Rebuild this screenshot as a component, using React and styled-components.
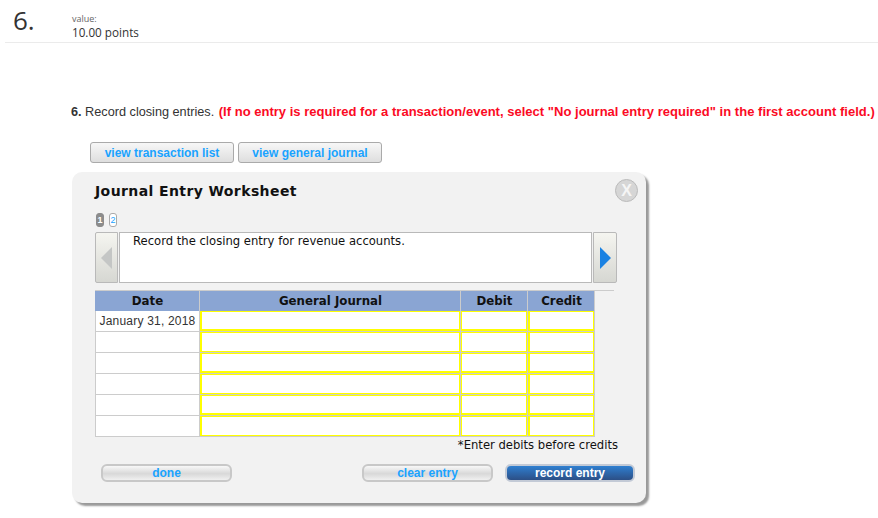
import React from "react";
import styled, { createGlobalStyle } from "styled-components";

const GlobalStyle = createGlobalStyle`
  html, body {
    margin: 0;
    padding: 0;
    background: #fff;
    overflow: hidden;
  }
`;

const columns = "104px 260px 66px 66px";
const rows = ["January 31, 2018", "", "", "", "", ""];

const App = () => {
  return (
    <>
      <GlobalStyle />
      <Page>
        <Header>
          <Number>6.</Number>
          <Value>
            <ValueLabel>value:</ValueLabel>
            <Points>10.00 points</Points>
          </Value>
        </Header>
        <Question>
          <b>6.</b> Record closing entries.{" "}
          <Warning>
            (If no entry is required for a transaction/event, select "No journal entry required" in the first account field.)
          </Warning>
        </Question>
        <ViewButtons>
          <ViewButton>view transaction list</ViewButton>
          <ViewButton>view general journal</ViewButton>
        </ViewButtons>
        <Panel>
          <TitleRow>
            <Title>Journal Entry Worksheet</Title>
            <CloseButton>X</CloseButton>
          </TitleRow>
          <Pager>
            <PageTag $active>1</PageTag>
            <PageTag>2</PageTag>
          </Pager>
          <Prompt>
            <Arrow $side="left">
              <svg width="11" height="22" viewBox="0 0 11 22">
                <path d="M11 0V22L0 11Z" fill="#c4c6c5" />
              </svg>
            </Arrow>
            <PromptText>Record the closing entry for revenue accounts.</PromptText>
            <Arrow $side="right">
              <svg width="11" height="22" viewBox="0 0 11 22">
                <path d="M0 0V22L11 11Z" fill="#1a82e2" />
              </svg>
            </Arrow>
          </Prompt>
          <Sheet>
            <HeadRow>
              <HeadCell>Date</HeadCell>
              <HeadCell>General Journal</HeadCell>
              <HeadCell>Debit</HeadCell>
              <HeadCell>Credit</HeadCell>
            </HeadRow>
            {rows.map((date, i) => (
              <Row key={i}>
                <DateCell>{date}</DateCell>
                <InputCell $strong $thick={i % 2 === 0} />
                <InputCell $thick={i % 2 === 0} />
                <InputCell $strong $thick={i % 2 === 0} />
              </Row>
            ))}
          </Sheet>
          <Note>*Enter debits before credits</Note>
          <Actions>
            <PillButton>done</PillButton>
            <RightActions>
              <PillButton>clear entry</PillButton>
              <PillButton $primary>record entry</PillButton>
            </RightActions>
          </Actions>
        </Panel>
      </Page>
    </>
  );
};

export default App;

const Page = styled.div`
  width: 878px;
  height: 518px;
  overflow: hidden;
  font-family: "Liberation Sans", Arial, sans-serif;
`;

const Header = styled.div`
  height: 42px;
  margin-left: 5px;
  border-bottom: 1px solid #ebebeb;
  display: flex;
`;

const Number = styled.div`
  width: 67px;
  padding: 5px 0 0 8px;
  box-sizing: border-box;
  font-family: "Open Sans", sans-serif;
  font-size: 26px;
  line-height: 30px;
  color: #333;
`;

const Value = styled.div`
  padding-top: 13px;
  font-family: "Open Sans", sans-serif;
  color: #333;
`;

const ValueLabel = styled.div`
  font-size: 9px;
  line-height: 11px;
  color: #666;
`;

const Points = styled.div`
  font-size: 11.7px;
  line-height: 16px;
`;

const Question = styled.div`
  margin: 60px 0 0 71px;
  width: 807px;
  height: 18px;
  font-size: 12.7px;
  line-height: 18px;
  color: #333;
  white-space: nowrap;
`;

const Warning = styled.b`
  color: #fb0a24;
  font-size: 13px;
  letter-spacing: 0.02px;
  margin-left: 1px;
`;

const ViewButtons = styled.div`
  display: flex;
  gap: 4px;
  margin: 21px 0 0 90px;
`;

const ViewButton = styled.div`
  width: 144px;
  height: 21px;
  box-sizing: border-box;
  border: 1px solid #aaa;
  border-radius: 3px;
  background: linear-gradient(#f7f7f7, #dedede);
  color: #1aa3ff;
  font-size: 12px;
  font-weight: bold;
  line-height: 21px;
  text-align: center;
`;

const Panel = styled.div`
  width: 574px;
  height: 331px;
  box-sizing: border-box;
  margin: 9px 0 0 72px;
  padding: 0 0 0 23px;
  border-radius: 10px;
  background: #f2f2f2;
  box-shadow: 3px 3px 2px #999;
  font-family: "DejaVu Sans", Verdana, sans-serif;
  color: #111;
`;

const TitleRow = styled.div`
  height: 41px;
  display: flex;
  justify-content: space-between;
  padding-right: 8px;
`;

const Title = styled.div`
  margin-top: 10px;
  font-size: 14px;
  font-weight: bold;
  letter-spacing: 0.4px;
  line-height: 18px;
`;

const CloseButton = styled.div`
  width: 21px;
  height: 21px;
  margin-top: 7px;
  border: 1px solid #bbb;
  border-radius: 50%;
  background: #d6d6d6;
  color: #f5f5f5;
  font-family: "Liberation Sans", sans-serif;
  font-size: 16px;
  font-weight: bold;
  line-height: 21px;
  text-align: center;
`;

const Pager = styled.div`
  display: flex;
  gap: 5px;
  height: 19px;
  padding-left: 1px;
`;

const PageTag = styled.div`
  width: 8px;
  height: 14px;
  box-sizing: border-box;
  border: 1px solid ${(p) => (p.$active ? "#8c8c8c" : "#aaa")};
  border-radius: 3px;
  background: ${(p) => (p.$active ? "#8c8c8c" : "#fff")};
  color: ${(p) => (p.$active ? "#fff" : "#1aa3ff")};
  font-family: "Liberation Sans", sans-serif;
  font-size: 9px;
  font-weight: ${(p) => (p.$active ? "bold" : "normal")};
  line-height: 12px;
  text-align: center;
`;

const Prompt = styled.div`
  display: flex;
  width: 522px;
  height: 51px;
  gap: 1px;
`;

const Arrow = styled.div`
  width: ${(p) => (p.$side === "left" ? "23px" : "24px")};
  box-sizing: border-box;
  border: 1px solid #b9b9b9;
  border-radius: ${(p) => (p.$side === "left" ? "2px 0 0 2px" : "0 2px 2px 0")};
  background: linear-gradient(#f5f5f0, #d6d7d2);
  display: flex;
  align-items: center;
  justify-content: center;
`;

const PromptText = styled.div`
  flex: 1;
  box-sizing: border-box;
  border: 1px solid #b9b9b9;
  background: #fff;
  padding: 1px 0 0 13px;
  font-size: 11.6px;
  line-height: 15px;
`;

const Sheet = styled.div`
  width: 500px;
  margin-top: 7px;
  border-top: 1px solid #ccc;
  position: relative;
  &::before {
    content: "";
    position: absolute;
    top: -1px;
    left: 500px;
    width: 19px;
    height: 1px;
    background: #ccc;
  }
`;

const HeadRow = styled.div`
  display: grid;
  grid-template-columns: ${columns};
  gap: 1px;
  height: 19px;
  background: #ccc;
  border-bottom: 1px solid #ccc;
`;

const HeadCell = styled.div`
  background: #8aa5d3;
  padding-left: 1px;
  font-size: 11.8px;
  font-weight: bold;
  line-height: 20px;
  text-align: center;
`;

const Row = styled.div`
  display: grid;
  grid-template-columns: ${columns};
  gap: 1px;
  height: 20px;
  background: #ccc;
  border-bottom: 1px solid #ccc;
`;

const DateCell = styled.div`
  background: #fff;
  border-left: 1px solid #ccc;
  font-family: "Liberation Sans", sans-serif;
  font-size: 12px;
  letter-spacing: 0.2px;
  line-height: 20px;
  text-align: center;
  color: #333;
`;

const InputCell = styled.div`
  background: #fff;
  border-style: solid;
  border-color: #ffff00;
  border-width: 1px 1px ${(p) => (p.$thick ? "2px" : "1px")} ${(p) => (p.$strong ? "2px" : "1px")};
`;

const Note = styled.div`
  width: 523px;
  height: 15px;
  padding-top: 1px;
  font-size: 11.6px;
  line-height: 15px;
  text-align: right;
`;

const Actions = styled.div`
  display: flex;
  justify-content: space-between;
  width: 534px;
  margin: 11px 0 0 6px;
`;

const RightActions = styled.div`
  display: flex;
  gap: 12px;
`;

const PillButton = styled.div`
  width: ${(p) => (p.$primary ? "130px" : "131px")};
  height: 18px;
  box-sizing: border-box;
  border: 2px solid ${(p) => (p.$primary ? "#c3cad6" : "#c8c8c8")};
  border-radius: 6px;
  background: ${(p) =>
    p.$primary
      ? "linear-gradient(#2f7fd0, #2c4f86)"
      : "linear-gradient(#f8f8f8, #d8d8d8 55%, #f0f0f0)"};
  color: ${(p) => (p.$primary ? "#fff" : "#1aa3ff")};
  font-family: "Liberation Sans", sans-serif;
  font-size: 12px;
  font-weight: bold;
  line-height: 14px;
  text-align: center;
`;
